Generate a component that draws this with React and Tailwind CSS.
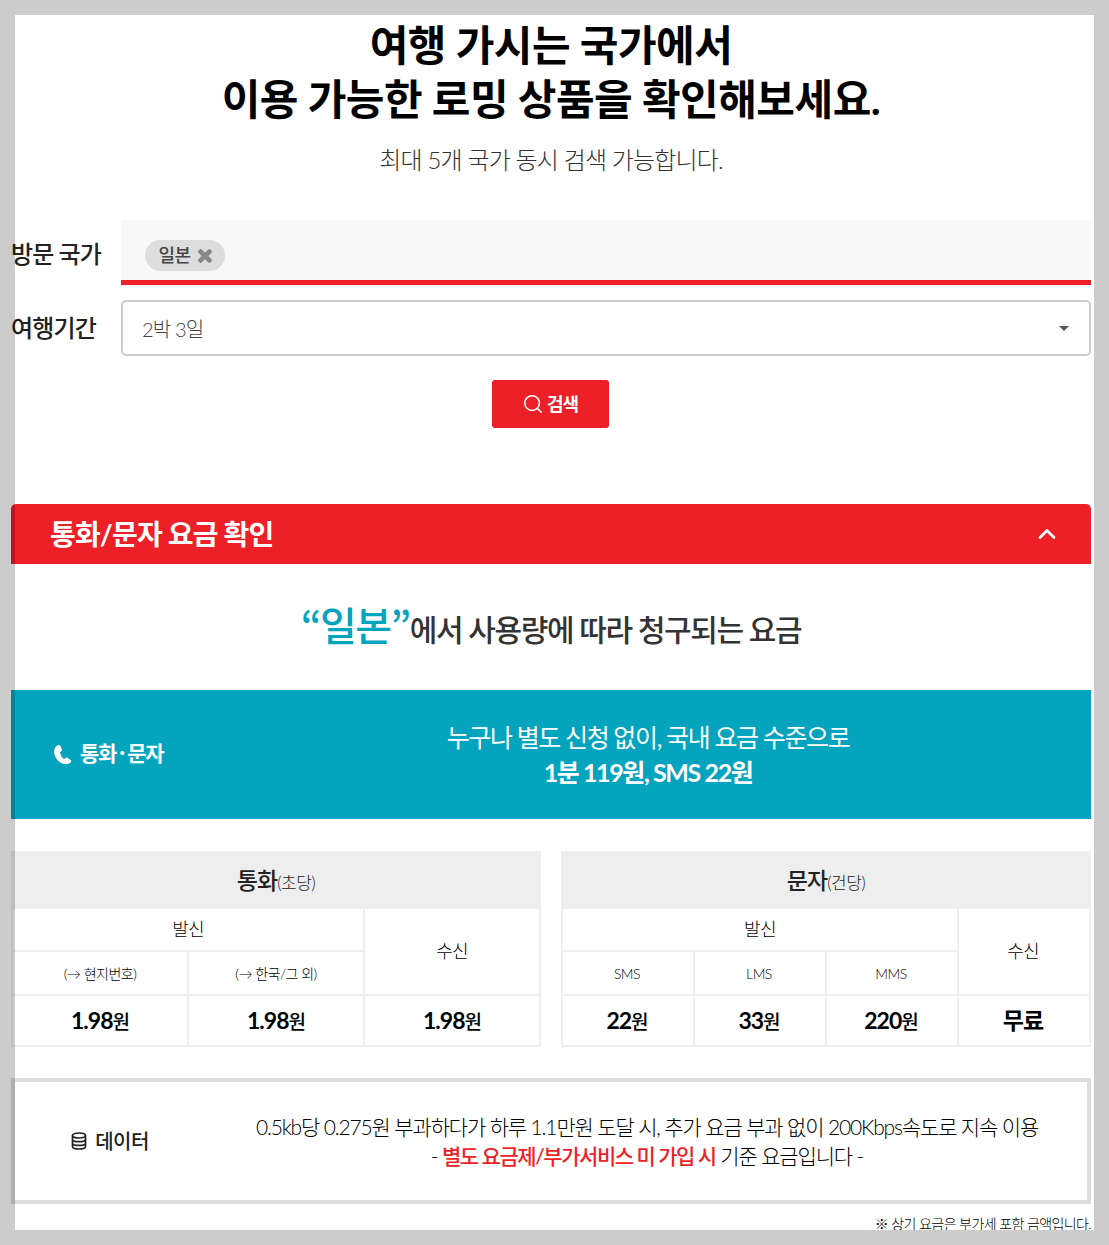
import { ChevronUp, Search } from 'lucide-react'
import { FaTimes } from 'react-icons/fa'

const Th = ({ children, className = '', ...props }) => (
  <td {...props} className={`border-2 border-[#eee] text-center align-middle ${className}`}>{children}</td>
)

function Table({ title, unit, subs, prices, widths, cell = '' }) {
  return (
    <table className="w-[528px] table-fixed border-collapse">
      <colgroup>
        {widths.map((w, i) => <col key={i} style={{ width: w }} />)}
      </colgroup>
      <tbody>
        <tr className="h-[56px] bg-[#eee]">
          <td colSpan={subs.length + 1} className="border-2 border-[#eee] text-center text-[23px] font-medium tracking-[-1px] text-[#222]">
            {title}<span className="text-[17px] font-light tracking-[-0.5px]">({unit})</span>
          </td>
        </tr>
        <tr className="h-[43px]">
          <Th colSpan={subs.length} className="text-[18px] font-light tracking-[-0.7px] text-black">발신</Th>
          <Th rowSpan={2} className={`text-[18px] font-light tracking-[-0.7px] text-black ${cell}`}>수신</Th>
        </tr>
        <tr className="h-[44px]">
          {subs.map((s) => <Th key={s} className={`pt-px text-[14px] font-light tracking-[-0.5px] text-black ${cell}`}>{s}</Th>)}
        </tr>
        <tr className="h-[51px]">
          {prices.map((p, i) => (
            <Th key={i} className={`text-[23px] font-bold tracking-[-1px] text-black ${cell}`}>
              {p.n}{p.u && <span className="text-[19px] font-medium">{p.u}</span>}
            </Th>
          ))}
        </tr>
      </tbody>
    </table>
  )
}

export default function App() {
  return (
    <div className="relative h-[1245px] w-[1109px] overflow-hidden bg-white font-['Lato','Noto_Sans_CJK_KR',sans-serif]">
      <div className="h-[1230px] overflow-hidden pl-[11px] pr-[18px] pt-[18px]">
        <div className="text-center">
          <h1 className="text-[42px] leading-[54px] font-bold tracking-[-0.5px] text-black">
            여행 가시는 국가에서<br />이용 가능한 로밍 상품을 확인해보세요.
          </h1>
          <p className="mt-[17px] text-[24px] leading-[34px] font-light tracking-[-0.85px] text-[#333]">최대 5개 국가 동시 검색 가능합니다.</p>
        </div>

        <div className="mt-[43px] flex items-center">
          <label className="w-[110px] pt-[2px] text-[24px] font-medium tracking-[-0.9px] text-[#222]">방문 국가</label>
          <div className="flex h-[65px] flex-1 items-center border-b-[5px] border-[#ed1f27] bg-[#f8f8f8] pl-6 pt-[11px]">
            <span className="flex h-[31px] w-20 items-center justify-center gap-[6px] rounded-full bg-[#ddd] pl-[3px] text-[18px] font-medium tracking-[-0.6px] text-[#444]">
              일본 <FaTimes className="stroke-[40] text-[18px] text-[#888]" />
            </span>
          </div>
        </div>
        <div className="mt-[15px] flex items-center">
          <label className="w-[110px] text-[24px] font-medium tracking-[-0.8px] text-[#222]">여행기간</label>
          <div className="flex h-[56px] flex-1 items-center justify-between rounded-[5px] border-2 border-[#ccc] pl-[19px] pr-[20px] pt-px text-[20px] font-light tracking-[-0.8px] text-[#444]">
            2박 3일
            <span className="h-0 w-0 border-x-[5px] border-t-[5px] border-x-transparent border-t-[#555]" />
          </div>
        </div>
        <div className="mt-6 flex justify-center">
          <button className="-ml-px flex h-12 w-[117px] items-center justify-center gap-[3px] rounded-[3px] bg-[#ed1f27] pr-px text-[18px] font-bold tracking-[-1px] text-white">
            <Search size={22} strokeWidth={1.7} />검색
          </button>
        </div>

        <div className="mt-[76px] flex h-[60px] items-center justify-between rounded-t-[5px] bg-[#ed1f27] pl-[39px] pr-[30px] text-white">
          <h2 className="text-[28px] font-bold tracking-[-0.85px]">통화/문자 요금 확인</h2>
          <ChevronUp size={28} strokeWidth={2.4} />
        </div>

        <h3 className="mt-[30px] h-[64px] text-center text-[30px] leading-[60px] font-medium tracking-[-1.4px] text-[#333]">
          <span className="font-['Noto_Sans_CJK_KR',sans-serif] text-[40px] font-medium tracking-[-1.5px] text-[#05a4be]">“일본”</span>에서 사용량에 따라 청구되는 요금
        </h3>

        <div className="mt-[32px] flex h-[129px] items-center bg-[#05a4be] pl-[42px] text-white">
          <div className="flex w-[300px] items-center gap-2 text-[21px] font-bold tracking-[-1.3px]">
            <svg viewBox="0 0 20 22" className="h-[21px] w-[19px]" fill="currentColor"><path d="M5.5 1 C3 2 .8 4.5 1.2 9 C1.7 14 6 20 11.5 21 C15 21.6 18 20.6 19 18.5 C19.3 17.6 19 17 18.2 16.5 L15.2 14.4 C14.4 13.9 13.7 14 13 14.7 L11.8 15.9 C9.6 14.6 7.7 11.2 7.4 8.6 L8.7 7.7 C9.5 7.1 9.7 6.4 9.3 5.5 L7.6 1.8 C7.2 1 6.4.7 5.5 1Z" /></svg>
            <span className="-mt-[3px] font-['Noto_Sans_CJK_KR',sans-serif]">통화·문자</span>
          </div>
          <p className="w-[590px] text-center text-[25px] leading-[35px] font-normal tracking-[-1.35px]">
            누구나 별도 신청 없이, 국내 요금 수준으로<br /><strong className="font-bold tracking-[-1.4px]">1분 119원, SMS 22원</strong>
          </p>
        </div>

        <div className="mt-8 flex justify-between">
          <Table
            title="통화"
            unit="초당"
            widths={['176px', '176px', '176px']}
            subs={['(→ 현지번호)', '(→ 한국/그 외)']}
            prices={[{ n: '1.98', u: '원' }, { n: '1.98', u: '원' }, { n: '1.98', u: '원' }]}
          />
          <Table
            title="문자"
            unit="건당"
            cell="pr-[2px]"
            widths={['132px', '132px', '132px', '132px']}
            subs={['SMS', 'LMS', 'MMS']}
            prices={[{ n: '22', u: '원' }, { n: '33', u: '원' }, { n: '220', u: '원' }, { n: '무료' }]}
          />
        </div>

        <div className="mt-[31px] flex h-[126px] items-center border-4 border-[#ddd]">
          <div className="flex w-[190px] items-center justify-center gap-[8px] text-[20px] font-medium tracking-[-0.5px] text-[#222]">
            <svg viewBox="0 0 16 18" className="h-[18px] w-4" fill="none" stroke="currentColor" strokeWidth="1.7">
              <ellipse cx="8" cy="3.5" rx="6.5" ry="2.5" />
              <path d="M1.5 3.5v11c0 1.4 2.9 2.5 6.5 2.5s6.5-1.1 6.5-2.5v-11M1.5 7.2c0 1.4 2.9 2.5 6.5 2.5s6.5-1.1 6.5-2.5M1.5 10.9c0 1.4 2.9 2.5 6.5 2.5s6.5-1.1 6.5-2.5" />
            </svg>
            데이터
          </div>
          <p className="ml-[2px] flex-1 whitespace-nowrap text-center text-[21px] leading-[29px] font-light tracking-[-1.15px] text-black">
            0.5kb당 0.275원 부과하다가 하루 1.1만원 도달 시, 추가 요금 부과 없이 200Kbps속도로 지속 이용<br />
            - <b className="font-medium tracking-[-1.45px] text-[#ed1f27]">별도 요금제/부가서비스 미 가입 시</b> 기준 요금입니다 -
          </p>
        </div>
        <p className="mt-[9px] text-right text-[14px] font-light tracking-[-0.6px] text-black">※ 상기 요금은 부가세 포함 금액입니다.</p>
      </div>
      <div className="pointer-events-none absolute inset-0 border-[15px] border-black/20" />
    </div>
  )
}
